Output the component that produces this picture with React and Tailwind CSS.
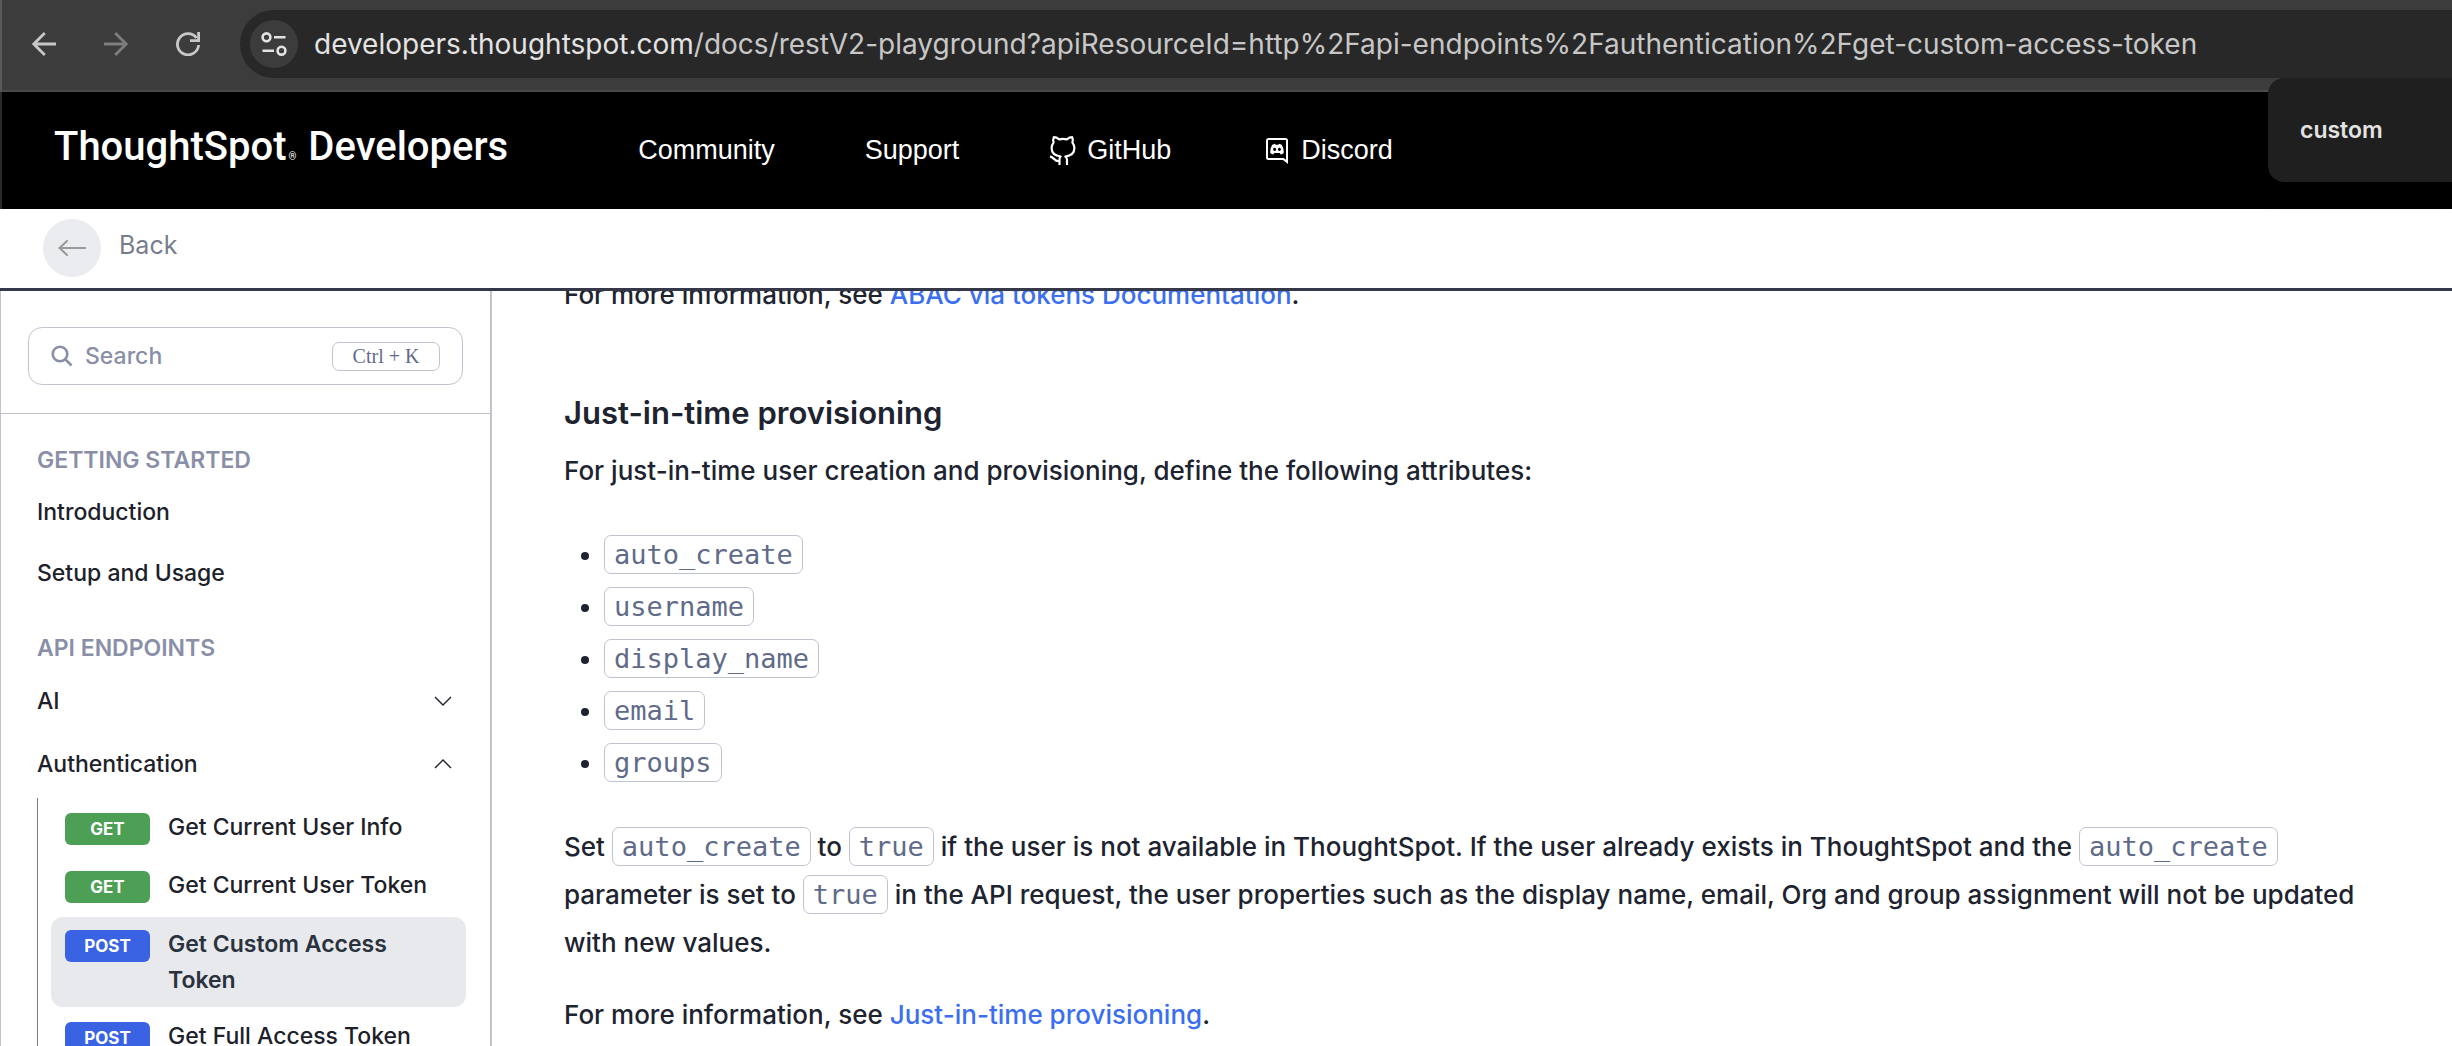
const NAV_LINKS = [
  { label: 'Community' },
  { label: 'Support' },
  { label: 'GitHub', Icon: GithubIcon },
  { label: 'Discord', Icon: DiscordIcon },
]

const ENDPOINTS = [
  { method: 'GET', name: 'Get Current User Info' },
  { method: 'GET', name: 'Get Current User Token' },
  { method: 'POST', name: 'Get Custom Access Token', active: true },
  { method: 'POST', name: 'Get Full Access Token' },
]

const ATTRIBUTES = ['auto_create', 'username', 'display_name', 'email', 'groups']

export default function App() {
  return (
    <div className="relative flex h-screen flex-col overflow-hidden bg-white font-['Inter',sans-serif]">
      <BrowserBar />
      <FindBox />
      <Header />
      <BackBar />
      <div className="flex min-h-0 flex-1 overflow-hidden">
        <Sidebar />
        <Article />
      </div>
    </div>
  )
}

function BrowserBar() {
  return (
    <div className="flex h-[92px] shrink-0 items-center border-b-2 border-l-2 border-b-[#4a4a4a] border-l-[#5a5a5a] bg-[#3c3c3c] pb-[2px] pl-[30px]">
      <div className="flex gap-12">
        <button aria-label="Back" className="text-[#c7c7c7]"><ArrowIcon /></button>
        <button aria-label="Forward" className="rotate-180 text-[#7d7d7d]"><ArrowIcon /></button>
        <button aria-label="Reload" className="text-[#c7c7c7]"><ReloadIcon /></button>
      </div>
      <div className="ml-10 flex h-[68px] flex-1 items-center gap-4 rounded-l-full bg-[#282828] pl-[10px]">
        <button aria-label="Site information" className="flex size-12 items-center justify-center rounded-full bg-[#3c3c3c] text-[#e3e3e3]">
          <SiteSettingsIcon />
        </button>
        <div className="text-[28px] whitespace-nowrap text-[#c7c7c7]">
          <span className="text-[#e3e3e3]">developers.thoughtspot.com</span>
          /docs/restV2-playground?apiResourceId=http%2Fapi-endpoints%2Fauthentication%2Fget-custom-access-token
        </div>
      </div>
    </div>
  )
}

// browser find-in-page popup, runs off the right edge
function FindBox() {
  return (
    <div className="absolute top-[78px] right-0 z-10 flex h-[104px] w-[184px] items-center rounded-l-2xl bg-[#1f1f1f] pl-8 shadow-xl">
      <input
        aria-label="Find in page"
        defaultValue="custom"
        className="w-full bg-transparent text-[23px] font-semibold text-[#e3e3e3] outline-none"
      />
    </div>
  )
}

function Header() {
  return (
    <header className="flex h-[117px] shrink-0 items-center border-l-2 border-[#2a2a2a] bg-black pl-[52px] text-white">
      <a href="#" className="flex items-baseline pb-2 font-['Roboto',sans-serif] text-[40px] font-medium whitespace-nowrap">
        ThoughtSpot<span className="mr-3 ml-[2px] text-[10px]">®</span>Developers
      </a>
      <nav className="ml-[130px] flex gap-[90px] font-['Liberation_Sans',sans-serif] text-[27px]">
        {NAV_LINKS.map(({ label, Icon }) => (
          <a key={label} href="#" className="flex items-center gap-[10px]">
            {Icon && <Icon />}
            {label}
          </a>
        ))}
      </nav>
    </header>
  )
}

function BackBar() {
  return (
    <div className="flex h-[82px] shrink-0 items-center border-b-[3px] border-[#353848] pb-[2px] pl-[43px]">
      <button className="flex items-center gap-[18px] text-[25px] text-[#777e8b]">
        <span className="flex size-[58px] items-center justify-center rounded-full bg-[#ebecf0] text-[#999]">
          <BackIcon />
        </span>
        <span className="pb-1">Back</span>
      </button>
    </div>
  )
}

function Sidebar() {
  return (
    <aside className="w-[492px] shrink-0 overflow-hidden border-r-2 border-l border-[#c0c4d0] text-[#1d2129]">
      <div className="border-b border-[#c0c4d0] px-[27px] pt-9 pb-7">
        <label className="flex h-[58px] items-center rounded-[14px] border border-[#c0c4d0] px-[22px] text-[#8a8fa8]">
          <SearchIcon />
          <input
            aria-label="Search"
            placeholder="Search"
            className="ml-3 w-0 flex-1 text-[23px] font-medium outline-none placeholder:text-[#8a8fa8]"
          />
          <kbd className="flex h-[29px] w-[108px] items-center justify-center rounded-[7px] border border-[#c0c4d0] font-['Liberation_Serif',serif] text-[20px] text-[#5f6b88]">
            Ctrl + K
          </kbd>
        </label>
      </div>
      <nav className="pl-9 text-[23px] leading-9 font-medium">
        <h2 className="mt-7 font-semibold text-[#8a8fa8]">GETTING STARTED</h2>
        <a href="#" className="mt-4 block">Introduction</a>
        <a href="#" className="mt-[25px] block">Setup and Usage</a>
        <h2 className="mt-[39px] font-semibold text-[#8a8fa8]">API ENDPOINTS</h2>
        <div className="mt-[11px] mb-[10px] flex flex-col gap-[15px]">
          <Group title="AI" />
          <Group title="Authentication" open />
        </div>
        <ul className="mr-6 border-l border-[#777e8b]">
          {ENDPOINTS.map((e) => <Endpoint key={e.name} {...e} />)}
        </ul>
      </nav>
    </aside>
  )
}

function Group({ title, open = false }) {
  return (
    <button aria-expanded={open} className="flex h-12 w-full items-center justify-between pr-[38px]">
      {title}
      <ChevronIcon className={open ? 'rotate-180' : ''} />
    </button>
  )
}

function Endpoint({ method, name, active }) {
  return (
    <li className={active ? 'mt-[3px] ml-[13px] rounded-xl bg-[#e8e9ed] font-semibold text-[#2a323e]' : 'ml-[13px]'}>
      <a href="#" className={active ? 'flex items-start py-[9px] pr-5 pl-[14px]' : 'flex items-start py-[11px] pl-[14px]'}>
        <span
          className={`mt-1 flex h-8 w-[85px] shrink-0 items-center justify-center rounded-md text-[17px] font-bold text-white ${method === 'GET' ? 'bg-[#4c9f54]' : 'bg-[#3a63e4]'}`}
        >
          {method}
        </span>
        <span className="ml-[18px]">{name}</span>
      </a>
    </li>
  )
}

function Article() {
  return (
    <main className="min-w-0 flex-1 overflow-hidden pr-14 pl-[72px] text-[26px] leading-[48px] font-medium text-[#1d232f]">
      <p className="-mt-5">
        For more information, see <Link>ABAC via tokens Documentation</Link>.
      </p>
      <h3 className="mt-[70px] text-[31px] font-semibold">Just-in-time provisioning</h3>
      <p className="mt-[10px]">For just-in-time user creation and provisioning, define the following attributes:</p>
      <ul className="mt-[34px] list-disc pl-10">
        {ATTRIBUTES.map((a) => (
          <li key={a} className="h-[52px] leading-[52px]"><Code>{a}</Code></li>
        ))}
      </ul>
      <p className="mt-[34px]">
        Set <Code>auto_create</Code> to <Code>true</Code> if the user is not available in ThoughtSpot. If the user
        already exists in ThoughtSpot and the <Code>auto_create</Code> parameter is set to <Code>true</Code> in the
        API request, the user properties such as the display name, email, Org and group assignment will not be
        updated with new values.
      </p>
      <p className="mt-6">
        For more information, see <Link>Just-in-time provisioning</Link>.
      </p>
    </main>
  )
}

function Link({ children }) {
  return <a href="#" className="text-[#3b6ff0]">{children}</a>
}

function Code({ children }) {
  return (
    <code className="rounded-[7px] border border-[#c0c4d0] px-[9px] py-[3px] font-['DejaVu_Sans_Mono',monospace] text-[27px] font-normal text-[#5f6b88]">
      {children}
    </code>
  )
}

function ArrowIcon() {
  return (
    <svg width="24" height="24" viewBox="0 0 24 24" fill="none" stroke="currentColor" strokeWidth="2.8">
      <path d="M24 12H2M12.8 1L1.8 12l11 11" />
    </svg>
  )
}

function ReloadIcon() {
  return (
    <svg width="24" height="24" viewBox="0 0 24 24" fill="none" stroke="currentColor" strokeWidth="2.8">
      <path d="M22.6 13A10.6 10.6 0 1 1 20.6 6" />
      <path d="M22.6 0v8.6H14" />
    </svg>
  )
}

function SiteSettingsIcon() {
  return (
    <svg width="26" height="24" viewBox="0 0 26 24" fill="none" stroke="currentColor" strokeWidth="2.6">
      <circle cx="5.5" cy="5.3" r="3.9" />
      <path d="M13 5.3h11.5M1.5 18.7H13" />
      <circle cx="20.5" cy="18.7" r="3.9" />
    </svg>
  )
}

function BackIcon() {
  return (
    <svg width="28" height="16" viewBox="0 0 28 16" fill="none" stroke="currentColor" strokeWidth="2" strokeLinecap="round">
      <path d="M27 8H1.5M9 1L1.5 8L9 15" />
    </svg>
  )
}

function SearchIcon() {
  return (
    <svg width="22" height="22" viewBox="0 0 22 22" fill="none" stroke="currentColor" strokeWidth="2.6">
      <circle cx="9" cy="9" r="7.3" />
      <path d="M14 14l6.5 6.5" />
    </svg>
  )
}

function ChevronIcon({ className }) {
  return (
    <svg width="18" height="10" viewBox="0 0 18 10" fill="none" stroke="currentColor" strokeWidth="1.4" className={className}>
      <path d="M1 1l8 8 8-8" />
    </svg>
  )
}

function GithubIcon() {
  return (
    <svg width="28" height="30" viewBox="0 0 28 30" fill="none" stroke="currentColor" strokeWidth="2.2" strokeLinejoin="round">
      <path d="M10.5 29v-5.5c0-1.5.3-2.3 1.2-3C6 19.8 2.6 17.3 2.6 12c0-2.3.8-4 2-5.4C4 4.8 4 3 4.8 1.2c2 0 3.8.9 5.4 2.2a15 15 0 0 1 7.6 0c1.6-1.3 3.4-2.2 5.4-2.2.8 1.8.8 3.6.2 5.4 1.2 1.400 2 3.100 2 5.400 0 5.300-3.400 7.800-9.100 8.500.9.700 1.700 1.700 1.700 3.200V29" />
      <path d="M10.5 25c-5.500.8-5-3.700-9.500-4.600" />
    </svg>
  )
}

function DiscordIcon() {
  return (
    <svg width="30" height="26" viewBox="-4 0 30 26" fill="currentColor">
      <path fillRule="evenodd" d="M3.500 0h17A2.500 2.500 0 0 1 23 2.500V26l-5-4H3.500A2.500 2.500 0 0 1 1 19.500v-17A2.500 2.500 0 0 1 3.500 0zM3 2v18h15.700l2.300 1.800V2z" />
      <path fillRule="evenodd" d="M7.300 6.700l2.600-.9.700 1h2.800l.7-1 2.600.9c1.500 2.600 2.200 5.200 2 8.200-.9.900-1.900 1.400-3 1.600l-.9-1.500H9.200l-.9 1.500c-1.100-.2-2.100-.7-3-1.600-.2-3 .5-5.600 2-8.200zM9.600 9.800a1.500 1.600 0 1 0 .01 0zM14.400 9.800a1.500 1.600 0 1 0 .01 0z" />
    </svg>
  )
}
